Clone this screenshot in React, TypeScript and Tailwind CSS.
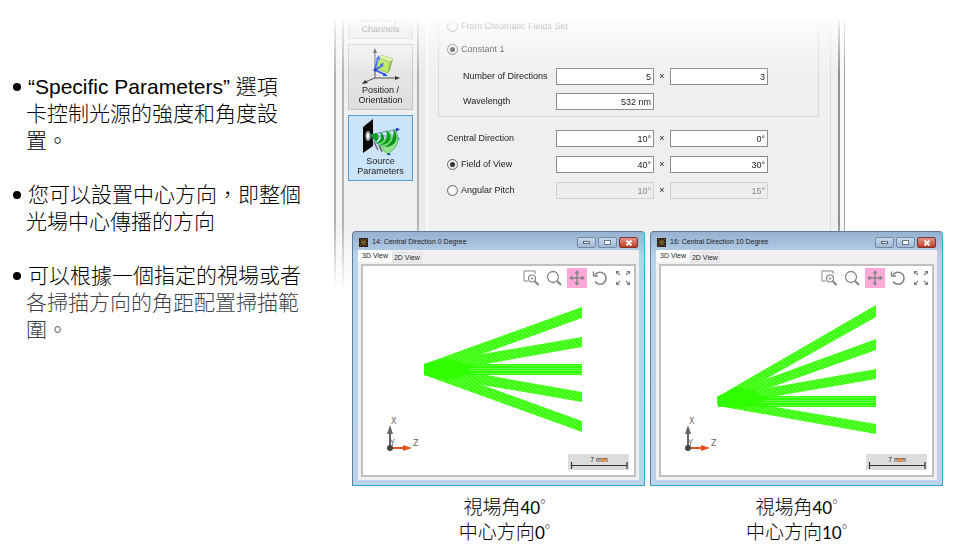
import React from "react";

type Point = [number, number];

interface Beam {
  id: string;
  points: Point[];
}

interface ViewWindow {
  id: string;
  title: string;
  beams: Beam[];
  core: Point[];
  axisLines: { y: number; x1: number; x2: number }[];
}

const WINDOWS: ViewWindow[] = [
  {
    id: "w14",
    title: "14: Central Direction 0 Degree",
    beams: [
      { id: "a", points: [[61, 76], [219, 19], [219, 30], [61, 87]] },
      { id: "b", points: [[61, 76], [219, 49], [219, 59], [61, 87]] },
      { id: "c", points: [[61, 76], [219, 104], [219, 114], [61, 87]] },
      { id: "d", points: [[61, 76], [219, 133], [219, 144], [61, 87]] },
    ],
    core: [[61, 76], [84, 71], [98, 74], [108, 81], [98, 89], [84, 92], [61, 87]],
    axisLines: [{ y: 76, x1: 61, x2: 219 }],
  },
  {
    id: "w16",
    title: "16: Central Direction 10 Degree",
    beams: [
      { id: "a", points: [[56, 109], [215, 17], [215, 29], [57, 118]] },
      { id: "b", points: [[56, 109], [215, 51], [215, 62], [57, 118]] },
      { id: "c", points: [[56, 109], [215, 81], [215, 91], [57, 118]] },
      { id: "d", points: [[56, 109], [215, 136], [215, 146], [57, 118]] },
    ],
    core: [[56, 109], [76, 99], [92, 102], [104, 112], [90, 119], [76, 120], [57, 118]],
    axisLines: [{ y: 108, x1: 57, x2: 215 }],
  },
];

const toPoints = (pts: Point[]) => pts.map((p) => p.join(",")).join(" ");

function PositionIcon() {
  return (
    <svg className="h-[38px] w-[40px]" viewBox="0 0 40 38" aria-hidden="true">
      <g stroke="#555" strokeWidth="1" fill="none">
        <path d="M14 31V5" />
        <path d="M14 31H36" />
        <path d="M14 31L4 35" />
      </g>
      <path d="M14 1l-2 5h4zM39 31l-5-2v4zM1 37l3-4 3 3z" fill="#333" />
      <path d="M18 11l3-3 11 4-3 3z" fill="#d9f78e" stroke="#6b9a2a" strokeWidth=".5" />
      <path d="M18 11l11 4-2 11-11-4z" fill="#b4e858" stroke="#6b9a2a" strokeWidth=".5" />
      <path d="M29 15l3-3-3 11-2 3z" fill="#7fae3a" />
      <path d="M14 23l3-13M14 23l8-5M14 23l11 5" stroke="#1c50e8" strokeWidth="1.600" fill="none" />
      <path d="M18 8l-3 4 4 1zM23 16l-4 1 2 3zM27 29l-4-3-1 3z" fill="#1c50e8" />
      <circle cx="14" cy="23" r="1.500" fill="#1234c0" />
    </svg>
  );
}

function SourceIcon() {
  return (
    <svg className="h-[38px] w-[40px]" viewBox="0 0 40 38" aria-hidden="true">
      <path d="M2 9L12 1V28L2 35z" fill="#080808" />
      <ellipse cx="7" cy="18" rx="2.600" ry="5" fill="#999" />
      <ellipse cx="7" cy="18" rx="1.400" ry="3" fill="#fff" />
      <path d="M9 17l28-6M9 18h28M9 19l19 17" stroke="#5b83c9" strokeWidth=".8" />
      <path d="M35 10l4 1-4 3zM35 19l4 2-4 1zM27 34l3 3-4 0z" fill="#1736c0" />
      <path d="M34 12c6 8 3 19-8 24l-8-8c9 0 15-7 16-16z" fill="#91e28f" stroke="#3a9d3b" strokeWidth=".6" />
      <path d="M28 12c6 7 3 15-6 18l-6-6c7-1 11-5 12-12z" fill="#75d574" />
      <path d="M32 11c7 8 3 18-8 18 7-4 10-10 8-18z" fill="#09901a" />
      <path d="M25 12c8 6 5 15-6 15 7-3 8-8 6-15z" fill="#09a01a" />
      <path d="M19 14c7 4 5 11-4 12 5-4 6-7 4-12z" fill="#0a9c1c" />
      <path d="M9 17l6-2c4 2 3 7 0 9z" fill="#139f27" />
      <path d="M13 24l4 8M18 27l3 7" stroke="#666" strokeWidth="1.500" />
    </svg>
  );
}

function SideButton({
  lines,
  selected,
  children,
}: {
  lines: string[];
  selected?: boolean;
  children?: React.ReactNode;
}) {
  const tone = selected
    ? "border-[#5b9bd0] bg-[#cce4f8]"
    : "border-[#c4c4c4] bg-linear-to-b from-[#ebebeb] to-[#dedede]";
  return (
    <button
      type="button"
      className={`flex h-[66px] w-full shrink-0 flex-col items-center justify-end border pb-1 text-[9px] leading-[10px] whitespace-nowrap ${tone}`}
    >
      {children}
      {lines.map((line) => (
        <span key={line}>{line}</span>
      ))}
    </button>
  );
}

function Radio({
  id,
  name,
  label,
  checked,
}: {
  id: string;
  name: string;
  label: string;
  checked?: boolean;
}) {
  return (
    <div className="flex h-[17px] w-[117px] shrink-0 items-center gap-[3px] pl-2">
      <input
        id={id}
        name={name}
        type="radio"
        defaultChecked={checked}
        className="size-[11px] shrink-0 appearance-none rounded-full border border-[#666] bg-white bg-clip-content p-[2px] checked:bg-[#333]"
      />
      <label htmlFor={id} className="whitespace-nowrap">
        {label}
      </label>
    </div>
  );
}

function NumberField({ label, value, disabled }: { label: string; value: string; disabled?: boolean }) {
  return (
    <input
      type="text"
      aria-label={label}
      defaultValue={value}
      disabled={disabled}
      className="h-[17px] w-[98px] min-w-0 border border-[#8c8c8c] bg-white px-[2px] text-right disabled:border-[#d0d0d0] disabled:bg-[#eeeeee] disabled:text-[#888]"
    />
  );
}

function FieldRow({
  children,
  label,
  values,
  disabled,
}: {
  children: React.ReactNode;
  label: string;
  values: string[];
  disabled?: boolean;
}) {
  return (
    <div className="flex h-[17px] items-center">
      {children}
      <NumberField label={`${label} X`} value={values[0]} disabled={disabled} />
      {values.length > 1 && (
        <>
          <span className="w-4 shrink-0 text-center">×</span>
          <NumberField label={`${label} Y`} value={values[1]} disabled={disabled} />
        </>
      )}
    </div>
  );
}

function SourceDialog() {
  return (
    <div className="mr-[110px] flex h-[272px] overflow-hidden border-l-2 border-[#b2b2b2] bg-[#efefef] text-[9px] text-[#222] [mask-image:linear-gradient(to_bottom,transparent_0,rgba(0,0,0,0.3)_10px,black_56px,black_205px,transparent_272px)]">
      <div className="w-[6px] shrink-0 bg-[#f3f3f3]" />
      <nav className="flex w-[77px] shrink-0 flex-col gap-[5px] border-x-2 border-[#b2b2b2] px-1">
        <div className="-mt-[45px]">
          <SideButton lines={["Geometry /", "Channels"]} />
        </div>
        <SideButton lines={["Position /", "Orientation"]}>
          <PositionIcon />
        </SideButton>
        <SideButton lines={["Source", "Parameters"]} selected>
          <SourceIcon />
        </SideButton>
      </nav>
      <div className="w-[9px] shrink-0 border-r-2 border-[#fafafa] bg-[#ebebeb]" />
      <form className="flex min-w-0 flex-1 flex-col gap-[13px] border-r border-[#dcdcdc] pr-[11px] pl-[10px]">
        <fieldset className="flex flex-col border-x border-b border-[#d8d8d8] pb-[6px]">
          <Radio id="chromatic" name="spectrum" label="From Chromatic Fields Set" />
          <div className="mt-[6px]">
            <Radio id="constant" name="spectrum" label="Constant 1" checked />
          </div>
          <div className="mt-[10px] flex flex-col gap-2">
            <FieldRow label="Number of Directions" values={["5", "3"]}>
              <span className="w-[117px] shrink-0 pl-6 whitespace-nowrap">Number of Directions</span>
            </FieldRow>
            <FieldRow label="Wavelength" values={["532 nm"]}>
              <span className="w-[117px] shrink-0 pl-6">Wavelength</span>
            </FieldRow>
          </div>
        </fieldset>
        <fieldset className="flex flex-col gap-[9px] border-x border-transparent">
          <FieldRow label="Central Direction" values={["10°", "0°"]}>
            <span className="w-[117px] shrink-0 pl-2">Central Direction</span>
          </FieldRow>
          <FieldRow label="Field of View" values={["40°", "30°"]}>
            <Radio id="fov" name="range" label="Field of View" checked />
          </FieldRow>
          <FieldRow label="Angular Pitch" values={["10°", "15°"]} disabled>
            <Radio id="pitch" name="range" label="Angular Pitch" />
          </FieldRow>
        </fieldset>
      </form>
      <div className="w-[7px] shrink-0" />
      <div className="w-[6px] shrink-0 border-l-2 border-[#8f8f8f] bg-[#f8f8f8]" />
      <div className="w-px shrink-0 bg-[#9c9c9c]" />
    </div>
  );
}

function ToolButton({ label, active, children }: { label: string; active?: boolean; children: React.ReactNode }) {
  return (
    <button
      type="button"
      aria-label={label}
      className={`flex size-5 items-center justify-center ${active ? "bg-[#ffa9d8]" : ""}`}
    >
      <svg viewBox="0 0 16 16" className="size-4" fill="none" stroke="#858585" strokeWidth="1.4" aria-hidden="true">
        {children}
      </svg>
    </button>
  );
}

function Toolbar() {
  return (
    <div className="flex h-[22px] items-end justify-end gap-[3px] pr-px">
      <ToolButton label="Zoom to area">
        <path d="M5 11H1V1H12V4" strokeWidth="1" />
        <circle cx="9" cy="8.500" r="3.500" strokeWidth="1.200" />
        <path d="M9 7v3M7.500 8.500h3" strokeWidth=".7" />
        <path d="M11.500 11l4 4" strokeWidth="2" />
      </ToolButton>
      <ToolButton label="Zoom">
        <circle cx="7" cy="7" r="5.500" strokeWidth="1.300" />
        <path d="M11 11l4 4" strokeWidth="2.200" />
      </ToolButton>
      <ToolButton label="Pan" active>
        <path d="M8 2v12M2 8h12" />
        <path d="M8 0L5.500 3.500h5zM8 16l-2.500-3.500h5zM0 8l3.500-2.500v5zM16 8l-3.500-2.500v5z" fill="#858585" stroke="none" />
      </ToolButton>
      <ToolButton label="Reset rotation">
        <path d="M3 5a6 6 0 1 1 0 6.500" strokeWidth="1.600" />
        <path d="M1.500 1.500V6H6" />
      </ToolButton>
      <ToolButton label="Fit to view">
        <path d="M5 5L2 2M11 5l3-3M5 11l-3 3M11 11l3 3" strokeWidth="1.200" />
        <path d="M1 1h3.500L1 4.500zM15 1h-3.500L15 4.500zM1 15h3.500L1 11.500zM15 15h-3.500L15 11.500z" fill="#777" stroke="none" />
      </ToolButton>
    </div>
  );
}

function RayPlot({ view }: { view: ViewWindow }) {
  const hatch = `hatch-${view.id}`;
  return (
    <svg viewBox="0 0 271 187" className="block w-full" role="img" aria-label={view.title}>
      <defs>
        <pattern id={hatch} width="3" height="3" patternUnits="userSpaceOnUse" patternTransform="rotate(40)">
          <rect width="3" height="3" fill="#36ff08" />
          <path d="M0 1.500H3" stroke="#78ff58" strokeWidth=".8" />
        </pattern>
      </defs>
      {view.beams.map((beam) => (
        <polygon key={beam.id} points={toPoints(beam.points)} fill={`url(#${hatch})`} />
      ))}
      {view.axisLines.map((l) => (
        <g key={l.y}>
          <rect x={l.x1} y={l.y} width={l.x2 - l.x1} height="11" fill="#30ff00" />
          <path
            d={`M${l.x1 + 34} ${l.y + 4.5}H${l.x2}M${l.x1 + 34} ${l.y + 6.5}H${l.x2}M${l.x1 + 50} ${l.y + 1.5}H${l.x2}M${l.x1 + 50} ${l.y + 9.5}H${l.x2}`}
            stroke="#86ff68"
            strokeWidth=".6"
          />
        </g>
      ))}
      <polygon points={toPoints(view.core)} fill="#30ff00" />

      <path d="M27 160V145" stroke="#666" strokeWidth="2" />
      <path d="M27 137l-3 9h6z" fill="#666" />
      <path d="M27 160H42" stroke="#e8501c" strokeWidth="2" />
      <path d="M49 160l-9-3v6z" fill="#e8501c" />
      <circle cx="27" cy="160" r="3" fill="#444" />
      <g fontFamily="'DejaVu Sans', sans-serif" fontSize="8" fill="#666">
        <text x="28" y="136">X</text>
        <text x="27" y="158">Y</text>
        <text x="50" y="158">Z</text>
      </g>

      <rect x="205" y="166" width="61" height="16" fill="#dcdcdc" />
      <path d="M208.500 177.500H264M208.500 174v7M264 174v7" stroke="#333" strokeWidth="1.200" fill="none" />
      <text x="236" y="174" textAnchor="middle" fontFamily="'Liberation Sans', Arial, sans-serif" fontSize="7" fill="#222">
        7 mm
      </text>
    </svg>
  );
}

function CaptionButtons() {
  const base = "flex h-[11px] w-[19px] items-center justify-center rounded-[2px] border";
  return (
    <div className="flex gap-[2px]">
      <button type="button" aria-label="Minimize" className={`${base} border-[#7388a5] bg-linear-to-b from-[#c9d9eb] to-[#9fb8d5]`}>
        <span className="h-[3px] w-[7px] border border-[#5b6778] bg-white" />
      </button>
      <button type="button" aria-label="Maximize" className={`${base} border-[#7388a5] bg-linear-to-b from-[#c9d9eb] to-[#9fb8d5]`}>
        <span className="h-[5px] w-[7px] border border-[#69778b] bg-white" />
      </button>
      <button type="button" aria-label="Close" className={`${base} border-[#7c3530] bg-linear-to-b from-[#e0958a] to-[#c03a24]`}>
        <svg viewBox="0 0 8 6" className="h-[6px] w-2" aria-hidden="true">
          <path d="M1.500 .5l5 5M6.500 .5l-5 5" stroke="#fff" strokeWidth="1.800" />
        </svg>
      </button>
    </div>
  );
}

function TitleIcon() {
  return (
    <svg viewBox="0 0 9 9" className="size-[9px] shrink-0" aria-hidden="true">
      <rect width="9" height="9" fill="#2c2119" />
      <path d="M1 1l7 7M8 1L1 8" stroke="#9a5a20" strokeWidth=".9" />
      <path d="M4.500 0v9M0 4.500h9" stroke="#4c6a36" strokeWidth=".6" />
      <rect x="3" y="3" width="3" height="3" fill="none" stroke="#b0652a" strokeWidth=".6" />
    </svg>
  );
}

function ResultWindow({ view }: { view: ViewWindow }) {
  return (
    <section className="rounded-t-[4px] border border-t-[#65788f] border-r-[#2fb4cf] border-b-[#2fa9c4] border-l-[#5b7f99] bg-linear-to-b from-[#97b1d1] via-[#b9d1ea] via-10% to-[#bdd3ec] px-[5px] pb-[5px] text-[7px] text-[#222]">
      <header className="flex h-[18px] items-center gap-1 pt-[3px] pr-px pl-px">
        <TitleIcon />
        <h2 className="flex-1 whitespace-nowrap">{view.title}</h2>
        <CaptionButtons />
      </header>
      <div className="bg-[#f0f0f0] px-[3px] pb-[3px]">
        <div role="tablist" className="-ml-[3px] flex h-[14px] items-start">
          <button type="button" role="tab" aria-selected="true" className="h-3 bg-white px-1 whitespace-nowrap">
            3D View
          </button>
          <button
            type="button"
            role="tab"
            aria-selected="false"
            className="mt-[2px] h-[11px] border border-[#e0e0e0] bg-[#ececec] px-px whitespace-nowrap"
          >
            2D View
          </button>
        </div>
        <div className="border-2 border-[#c0c0c0] bg-white">
          <Toolbar />
          <RayPlot view={view} />
        </div>
      </div>
    </section>
  );
}

function Bullet({ children }: { children: React.ReactNode }) {
  return (
    <li className="flex gap-[5px]">
      <span aria-hidden="true" className="flex h-[27px] w-2 shrink-0 items-center">
        <span className="size-2 rounded-full bg-black" />
      </span>
      <p className="indent-[2px] whitespace-nowrap">{children}</p>
    </li>
  );
}

function AngleLine({ label, degrees }: { label: string; degrees: number }) {
  return (
    <span className="block h-[25px]">
      {label}
      <span className="text-[17px] font-normal">{degrees}</span>
      <span className="align-[4px] text-[13px] leading-none">°</span>
    </span>
  );
}

export default function App() {
  return (
    <main
      lang="zh-Hant"
      className="grid grid-cols-[334px_minmax(0,1fr)] bg-white font-['Liberation_Sans',Arial,'Noto_Sans_CJK_TC',sans-serif] text-black"
    >
      <ul className="flex flex-col gap-[27px] pt-[73px] pl-[13px] text-[21px] leading-[27px] font-light">
        <Bullet>
          “Specific Parameters” 選項
          <span className="block indent-0">卡控制光源的強度和角度設</span>
          <span className="block indent-0">置。</span>
        </Bullet>
        <Bullet>
          您可以設置中心方向，即整個
          <span className="block indent-0">光場中心傳播的方向</span>
        </Bullet>
        <Bullet>
          可以根據一個指定的視場或者
          <span className="block indent-0 text-[#404048]">各掃描方向的角距配置掃描範</span>
          <span className="block indent-0 text-[#404048]">圍。</span>
        </Bullet>
      </ul>

      <div className="pt-[18px]">
        <SourceDialog />
        <div className="relative -mt-[59px] grid grid-cols-2 gap-x-[5px] pr-3 pl-[18px]">
          {WINDOWS.map((view) => (
            <ResultWindow key={view.id} view={view} />
          ))}
          <p className="mt-2 pl-3 text-center font-[Lato,'Noto_Sans_CJK_TC',sans-serif] text-[19px] leading-[25px] font-light">
            <AngleLine label="視場角" degrees={40} />
            <AngleLine label="中心方向" degrees={0} />
          </p>
          <p className="mt-2 text-center font-[Lato,'Noto_Sans_CJK_TC',sans-serif] text-[19px] leading-[25px] font-light">
            <AngleLine label="視場角" degrees={40} />
            <AngleLine label="中心方向" degrees={10} />
          </p>
        </div>
      </div>
    </main>
  );
}
